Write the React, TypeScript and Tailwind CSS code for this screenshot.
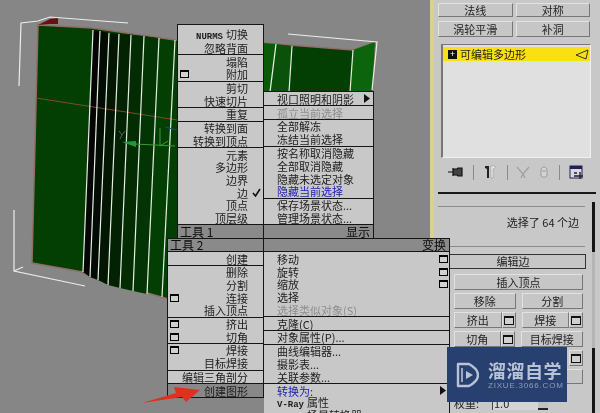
const font = { fontFamily: '"Noto Sans CJK SC", "Liberation Sans", sans-serif' };

type Row = { t: string; box?: boolean; off?: boolean; blue?: boolean; check?: boolean; arrow?: boolean; hot?: boolean };

const topLeft: Row[][] = [
	[{ t: "NURMS 切换" }, { t: "忽略背面" }],
	[{ t: "塌陷" }, { t: "附加", box: true }],
	[{ t: "剪切" }, { t: "快速切片" }],
	[{ t: "重复" }],
	[{ t: "转换到面" }, { t: "转换到顶点" }],
	[{ t: "元素" }, { t: "多边形" }, { t: "边界" }, { t: "边", check: true }, { t: "顶点" }, { t: "顶层级" }],
];

const topRight: Row[][] = [
	[{ t: "视口照明和阴影", arrow: true }],
	[{ t: "孤立当前选择", off: true }],
	[{ t: "全部解冻" }, { t: "冻结当前选择" }],
	[{ t: "按名称取消隐藏" }, { t: "全部取消隐藏" }, { t: "隐藏未选定对象" }, { t: "隐藏当前选择", blue: true }],
	[{ t: "保存场景状态..." }, { t: "管理场景状态..." }],
];

const bottomLeft: Row[][] = [
	[{ t: "创建" }],
	[{ t: "删除" }, { t: "分割" }, { t: "连接", box: true }, { t: "插入顶点" }],
	[{ t: "挤出", box: true }, { t: "切角", box: true }],
	[{ t: "焊接", box: true }, { t: "目标焊接" }],
	[{ t: "编辑三角剖分" }],
	[{ t: "创建图形", hot: true }],
];

const bottomRight: Row[][] = [
	[{ t: "移动", box: true }, { t: "旋转", box: true }, { t: "缩放", box: true }, { t: "选择" }, { t: "选择类似对象(S)", off: true }],
	[{ t: "克隆(C)" }],
	[{ t: "对象属性(P)..." }],
	[{ t: "曲线编辑器..." }, { t: "摄影表..." }, { t: "关联参数..." }],
	[{ t: "转换为:", blue: true, arrow: true }, { t: "V-Ray 属性" }, { t: "V-Ray 场景转换器" }],
];

function OptionBox() {
	return <span className="w-[9px] h-[8px] shrink-0 border border-t-2 border-black bg-[#d0d0d0]" />;
}

// the latin words in this menu are a narrow bitmap font
function Label({ text }: { text: string }) {
	const m = text.match(/^(NURMS|V-Ray) (.*)$/);
	if (!m) return <>{text}</>;
	return (
		<>
			<span className="text-[9px] font-bold mr-[3px]" style={{ fontFamily: '"Liberation Mono", monospace' }}>
				{m[1]}
			</span>
			{m[2]}
		</>
	);
}

function MenuRow({ row, side }: { row: Row; side: "left" | "right" }) {
	const color = row.off ? "text-[#8e8e8e]" : row.blue ? "text-[#2020b0]" : "text-[#1c1c1c]";
	if (side === "left") {
		return (
			<div className={`h-[12.7px] flex items-center pl-[2px] pr-[15px] leading-[12px] ${color} ${row.hot ? "bg-[#888888]" : ""}`}>
				<span className="w-[9px] shrink-0 flex">{row.box && <OptionBox />}</span>
				<span className="flex-1 text-right whitespace-nowrap">
					<Label text={row.t} />
				</span>
				{row.check && (
					<svg viewBox="0 0 9 9" className="absolute ml-[72px] w-[9px] h-[9px]">
						<path d="M1 5 L3.5 8 L8 1" fill="none" stroke="#111" strokeWidth="1.6" />
					</svg>
				)}
			</div>
		);
	}
	return (
		<div className={`h-[12.8px] flex items-center pl-[13px] pr-[1px] leading-[12px] ${color}`}>
			<span className="flex-1 whitespace-nowrap">
				<Label text={row.t} />
			</span>
			{row.box && <OptionBox />}
			{row.arrow && (
				<svg viewBox="0 0 6 9" className="w-[6px] h-[9px] mr-[2px]">
					<polygon points="0,0 6,4.5 0,9" fill="#111" />
				</svg>
			)}
		</div>
	);
}

function Quad({ groups, side, pad }: { groups: Row[][]; side: "left" | "right"; pad?: boolean }) {
	return (
		<div className={`flex flex-col w-full ${pad ? "pt-[4px]" : ""}`}>
			{groups.map((g, i) => (
				<div key={i} className={i > 0 ? "border-t border-[#151515]" : ""}>
					{g.map((r) => (
						<MenuRow key={r.t} row={r} side={side} />
					))}
				</div>
			))}
		</div>
	);
}

function Btn({ children, className = "" }: { children?: React.ReactNode; className?: string }) {
	return (
		<div className={`flex items-center justify-center bg-[#c6c6c6] border border-t-[#e2e2e2] border-l-[#e2e2e2] border-b-[#777777] border-r-[#777777] text-[#222222] whitespace-nowrap ${className}`}>
			{children}
		</div>
	);
}

function SmallBtn() {
	return (
		<Btn className="w-[14px] h-[16px]">
			<span className="w-[10px] h-[9px] border border-t-2 border-[#111111] bg-[#d0d0d0]" />
		</Btn>
	);
}

function Viewport() {
	// slanted edge loops, top point then bottom point
	const loops = [
		[93, 30, 83, 272],
		[100, 31, 90, 277],
		[109, 33, 98, 280],
		[119, 34, 108, 285],
		[131, 35, 120, 288],
		[144, 36, 133, 291],
		[159, 38, 147, 294],
		[175, 40, 162, 297],
		[276, 44, 270, 92],
		[292, 46, 289, 92],
		[353, 50, 350, 92],
	];
	const bands = [
		["93,30 100,31 90,277 83,272", "#050505"],
		["100,31 109,33 98,280 90,277", "#020c02"],
		["109,33 119,34 108,285 98,280", "#021602"],
		["119,34 131,35 120,288 108,285", "#022202"],
		["131,35 144,36 133,291 120,288", "#032c03"],
		["144,36 159,38 147,294 133,291", "#033403"],
		["353,50 375,42 372,92 350,92", "#0c640c"],
		["263,43 276,44 270,92 263,92", "#0a5a0a"],
		["276,44 292,46 289,92 270,92", "#0a520a"],
	];
	return (
		<svg viewBox="0 0 430 413" className="block w-full h-full">
			<polygon points="38,25 92,28 175,40 263,43 353,50 375,42 372,92 177,300 165,298 90,277 83,272 32,263" fill="#033e03" stroke="#8f6e66" strokeWidth="1.5" />
			{bands.map(([p, c]) => (
				<polygon key={p} points={p} fill={c} />
			))}
			<polygon points="38,25 50,19 58,18 58,24 50,24" fill="#6a1010" />
			<line x1="36" y1="98" x2="177" y2="120" stroke="#7a4a28" />
			{loops.map(([a, b, c, d]) => (
				<line key={a} x1={a} y1={b} x2={c} y2={d} stroke="#e4efe4" strokeWidth="1.2" />
			))}
			<path d="M19 86 L21 23 L38 21 L50 17 L128 23" fill="none" stroke="#ececec" strokeWidth="1.2" />
			<path d="M14 210 L14 271 L85 286 M14 271 L23 267" fill="none" stroke="#ececec" strokeWidth="1.2" />
			<path d="M288 34 L377 42 L372 90" fill="none" stroke="#ececec" strokeWidth="1.2" />
			<path d="M165 127 L177 130" stroke="#1c4a70" strokeWidth="1.2" />
			<path d="M135 144 L175 146 M160 128 L160 146 M160 146 L168 141" fill="none" stroke="#3a9a3a" />
			<polygon points="122,142 136,141 136,147" fill="#1f9a3a" />
			<path d="M119 131 L122 135 L125 131 M122 135 L120 139" fill="none" stroke="#4a6a5a" />
		</svg>
	);
}

function Toolbar() {
	return (
		<div className="h-[18px] mt-[5px] flex items-center text-[#222222]">
			<svg viewBox="0 0 16 12" className="ml-[10px] w-[16px] h-[12px]">
				<path d="M0 6 H5 M5 2 V10 M5 3 H9 L10 2 H14 V10 H10 L9 9 H5" fill="#444" stroke="#111" strokeWidth="1.2" />
			</svg>
			<span className="ml-[9px] w-px h-[15px] bg-[#8a8a8a]" />
			<svg viewBox="0 0 12 14" className="ml-[10px] w-[12px] h-[14px]">
				<path d="M1 1 H5 V13 H3 V4 L1 3 Z" fill="#222" />
				<path d="M7 1 H11 V3 L9 4 V13 H7 Z" fill="#eeeeee" stroke="#999" strokeWidth="0.6" />
			</svg>
			<span className="ml-[11px] w-px h-[15px] bg-[#8a8a8a]" />
			<svg viewBox="0 0 14 14" className="ml-[8px] w-[14px] h-[14px]">
				<path d="M1 2 L7 9 L13 2 M7 9 L5 13 M7 9 L9 13" fill="none" stroke="#a0a0a0" strokeWidth="1.2" />
			</svg>
			<svg viewBox="0 0 10 14" className="ml-[9px] w-[10px] h-[14px]">
				<path d="M2 4 Q5 0 8 4 V11 Q5 14 2 11 Z M3 6 H7" fill="#d4d4d4" stroke="#9a9a9a" />
			</svg>
			<span className="ml-[10px] w-px h-[15px] bg-[#8a8a8a]" />
			<svg viewBox="0 0 15 15" className="ml-[9px] w-[15px] h-[15px]">
				<rect x="1" y="1" width="12" height="12" fill="#d8d8e4" stroke="#20205a" />
				<rect x="1" y="1" width="12" height="3" fill="#20205a" />
				<path d="M5 8 H8 M5 11 H14 M11 7 V14" stroke="#222" strokeWidth="1.4" />
			</svg>
		</div>
	);
}

function SidePanel() {
	return (
		<div className="w-[170px] shrink-0 flex bg-[#c8c8c8] border-l-[4px] border-[#d8d28c] text-[11px]">
			<div className="w-[158px] shrink-0 pl-[4px] pt-[3px]">
				<div className="grid grid-cols-2 gap-x-[3px] gap-y-[4px] w-[152px]">
					<Btn className="h-[14px]">法线</Btn>
					<Btn className="h-[14px]">对称</Btn>
					<Btn className="h-[16px]">涡轮平滑</Btn>
					<Btn className="h-[16px]">补洞</Btn>
				</div>
				<div className="mt-[7px] ml-[3px] w-[150px] h-[114px] bg-[#e0e0e0] border-l-2 border-t border-r border-b border-t-[#777777] border-l-[#777777] border-r-[#f0f0f0] border-b-[#f0f0f0] pt-[2px]">
					<div className="h-[14px] bg-[#f8e012] flex items-center pl-[5px] text-[#222222]">
						<span className="w-[9px] h-[9px] bg-[#111111] text-white text-[9px] leading-[8px] text-center">+</span>
						<span className="ml-[3px] flex-1 whitespace-nowrap">可编辑多边形</span>
						<svg viewBox="0 0 14 11" className="w-[14px] h-[11px] mr-[1px]">
							<polygon points="1,6 13,1 11,10" fill="#f8e012" stroke="#333" />
						</svg>
					</div>
				</div>
				<Toolbar />
				<div className="mt-[11px] h-[2px] w-[158px] bg-[#181818]" />
				<div className="mt-[12px] w-[147px] h-px bg-[#8c8c8c]" />
				<div className="mt-[6px] h-[18px] flex items-center justify-end pr-[13px] text-[#222222] whitespace-pre">选择了 64 个边</div>
				<div className="mt-[15px] w-[147px] h-px bg-[#8c8c8c]" />
				<div className="mt-[7px] pl-[2px]">
					<Btn className="h-[15px] w-[146px] bg-[#a8a8a8] !border-[#333333]">编辑边</Btn>
					<div className="mt-[5px] pl-[14px] flex flex-col gap-[3px] w-[143px]">
						<Btn className="h-[16px]">插入顶点</Btn>
						<div className="flex gap-[6px]">
							<Btn className="h-[16px] flex-1">移除</Btn>
							<Btn className="h-[16px] flex-1">分割</Btn>
						</div>
						<div className="flex gap-[6px]">
							<div className="flex-1 flex">
								<Btn className="h-[16px] flex-1">挤出</Btn>
								<SmallBtn />
							</div>
							<div className="flex-1 flex">
								<Btn className="h-[16px] flex-1">焊接</Btn>
								<SmallBtn />
							</div>
						</div>
						<div className="flex gap-[6px]">
							<div className="flex-1 flex">
								<Btn className="h-[16px] flex-1">切角</Btn>
								<SmallBtn />
							</div>
							<Btn className="h-[16px] flex-1">目标焊接</Btn>
						</div>
						<div className="flex justify-end">
							<SmallBtn />
						</div>
						<Btn className="h-[15px]" />
						<div className="mt-[8px] flex items-center text-[#222222]">
							<span className="w-[38px] whitespace-nowrap">权重:</span>
							<span className="w-[46px] h-[14px] bg-[#d4d4d4] border-l border-[#444444] leading-[14px] pl-[1px]">1.0</span>
							<span className="w-[10px] h-[14px] bg-[#c0c0c0] border-b-2 border-[#222222]" />
						</div>
					</div>
				</div>
			</div>
			<div className="w-[8px] flex flex-col pt-[202px]">
				<div className="h-[50px] w-[3px] bg-[#151515]" />
				<div className="h-[96px] w-[3px] bg-[#b4b4b4]" />
				<div className="flex-1 w-[3px] bg-[#151515]" />
			</div>
		</div>
	);
}

function QuadMenu() {
	return (
		<div className="absolute left-[167px] top-[24px] text-[11px]">
			{/* upper quadrants */}
			<div className="flex items-end">
				<div className="ml-[10px] bg-[#c8c8c8] border border-b-0 border-[#151515] w-[87px]">
					<Quad groups={topLeft} side="left" pad />
					<div className="h-[14px] border-t border-[#151515] bg-[#8a8a8a] pl-[2px] text-[12px] leading-[13px] text-[#0c0c0c]">工具 1</div>
				</div>
				<div className="bg-[#c8c8c8] border border-l-0 border-b-0 border-[#151515] w-[110px]">
					<Quad groups={topRight} side="right" />
					<div className="h-[14px] border-t border-[#151515] bg-[#8a8a8a] pr-[3px] text-right text-[12px] leading-[13px] text-[#0c0c0c]">显示</div>
				</div>
			</div>
			{/* lower quadrants */}
			<div className="flex items-start border-t border-[#151515]">
				<div className="bg-[#c8c8c8] border-x border-b border-[#151515] w-[97px]">
					<div className="h-[13px] border-b border-[#151515] bg-[#8a8a8a] pl-[2px] text-[12px] leading-[12px] text-[#0c0c0c]">工具 2</div>
					<Quad groups={bottomLeft} side="left" />
				</div>
				<div className="bg-[#c8c8c8] border-r border-[#151515] w-[186px]">
					<div className="h-[13px] border-b border-[#151515] bg-[#8a8a8a] pr-[3px] text-right text-[12px] leading-[12px] text-[#0c0c0c]">变换</div>
					<Quad groups={bottomRight} side="right" />
				</div>
			</div>
		</div>
	);
}

function Watermark() {
	return (
		<div className="absolute left-[447px] top-[347px] w-[120px] h-[55px] bg-[#27406f] flex items-center pl-[8px]">
			<svg viewBox="0 0 24 28" className="w-[24px] h-[28px] shrink-0">
				<path d="M3 3 L14 3 Q23 8 23 14 Q23 20 14 25 L3 25 Z" fill="none" stroke="#b9c3d6" strokeWidth="2.4" strokeLinejoin="round" />
				<path d="M7 7 V21" stroke="#b9c3d6" strokeWidth="1.6" />
				<polygon points="11,10 18,14 11,18" fill="#b9c3d6" />
			</svg>
			<div className="ml-[9px] flex flex-col">
				<span className="text-[18px] leading-[22px] tracking-[0.5px] font-bold text-[#b9c3d6] whitespace-nowrap">溜溜自学</span>
				<span className="text-[8px] leading-[9px] tracking-[0.8px] text-[#8f9db8] whitespace-nowrap" style={{ fontFamily: '"Liberation Sans", sans-serif' }}>
					ZIXUE.3066.COM
				</span>
			</div>
		</div>
	);
}

export default function App() {
	return (
		<div className="relative w-[600px] h-[413px] flex overflow-hidden bg-[#868686] blur-[0.35px]" style={font}>
			<div className="flex-1 min-w-0">
				<Viewport />
			</div>
			<SidePanel />
			<QuadMenu />
			<svg viewBox="0 0 60 20" className="absolute left-[142px] top-[386px] w-[60px] h-[20px]">
				<polygon points="0,17 34,7 32,1 58,4 44,16 40,11" fill="#e03020" />
			</svg>
			<Watermark />
		</div>
	);
}
